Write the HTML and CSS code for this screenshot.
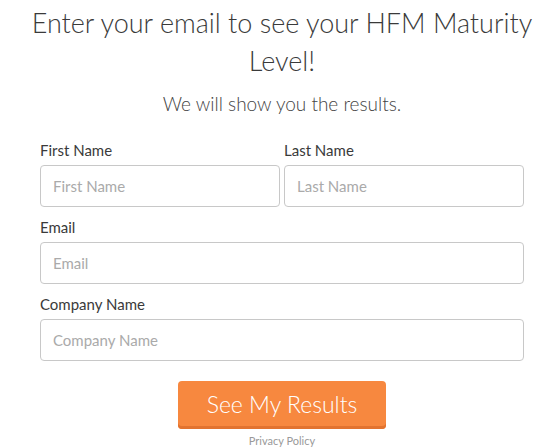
FILE: index.html
```html
<!DOCTYPE html>
<html>
<head>
<meta charset="utf-8">
<link rel="stylesheet" href="styles.css">
</head>
<body>
<div class="page">
  <h1 class="title">Enter your email to see your HFM Maturity Level!</h1>
  <p class="subtitle">We will show you the results.</p>
  <form class="form">
    <div class="row">
      <div class="field">
        <label class="label">First Name</label>
        <input class="input" type="text" placeholder="First Name">
      </div>
      <div class="field">
        <label class="label">Last Name</label>
        <input class="input" type="text" placeholder="Last Name">
      </div>
    </div>
    <div class="field">
      <label class="label">Email</label>
      <input class="input" type="text" placeholder="Email">
    </div>
    <div class="field">
      <label class="label">Company Name</label>
      <input class="input" type="text" placeholder="Company Name">
    </div>
    <div class="actions">
      <button class="button" type="button">See My Results</button>
      <a class="privacy">Privacy Policy</a>
    </div>
  </form>
</div>
</body>
</html>
```
FILE: styles.css
```css
html, body {
  margin: 0;
  padding: 0;
  background: #ffffff;
}
body {
  font-family: Lato, "Open Sans", sans-serif;
  color: #333;
}
.page {
  width: 484px;
  margin-left: 40px;
  display: flex;
  flex-direction: column;
  align-items: stretch;
}
.title {
  margin: 4px -20px 0;
  font-size: 27px;
  font-weight: 300;
  line-height: 38px;
  text-align: center;
  color: #3a3a3a;
}
.subtitle {
  margin: 12px 0 0;
  font-size: 19px;
  font-weight: 300;
  line-height: 24px;
  text-align: center;
  color: #444;
}
.form {
  margin-top: 24px;
  display: flex;
  flex-direction: column;
  gap: 10px;
}
.row {
  display: flex;
  gap: 4px;
}
.row .field {
  flex: 1;
}
.field {
  display: flex;
  flex-direction: column;
}
.label {
  font-size: 15px;
  line-height: 20px;
  margin-bottom: 5px;
  color: #3a3a3a;
}
.input {
  box-sizing: border-box;
  height: 42px;
  border: 1px solid #c8c8c8;
  border-radius: 4px;
  padding: 0 12px;
  font-family: inherit;
  font-size: 15px;
  color: #333;
  background: #fff;
  outline: none;
}
.input::placeholder {
  color: #aaa;
}
.actions {
  display: flex;
  flex-direction: column;
  align-items: center;
  margin-top: 10px;
}
.button {
  width: 208px;
  height: 48px;
  border: none;
  border-radius: 4px;
  background: #f7883f;
  box-shadow: inset 0 -3px 0 #e2732f;
  color: #fff;
  font-family: inherit;
  font-size: 23px;
  font-weight: 300;
  padding: 0 0 3px;
}
.privacy {
  margin-top: 5px;
  font-size: 11px;
  line-height: 14px;
  color: #999;
}
```
